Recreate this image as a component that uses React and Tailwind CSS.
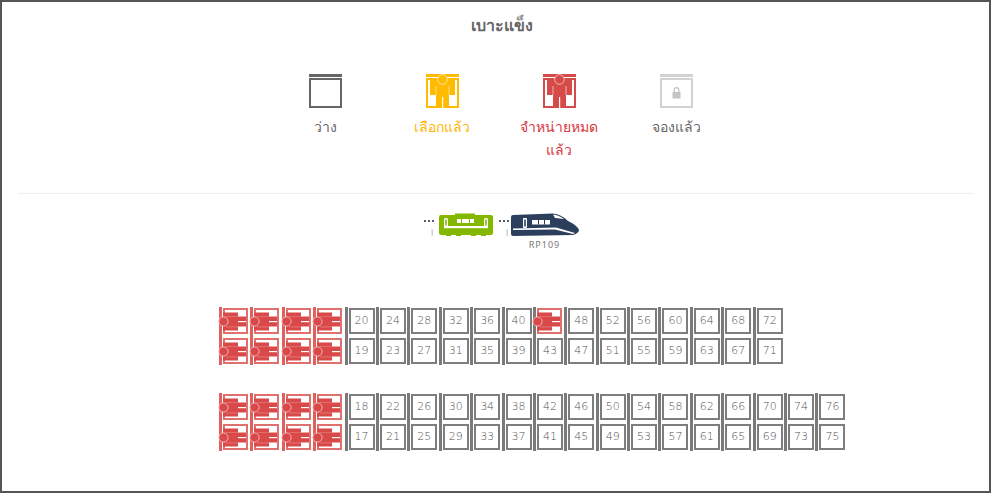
import React from 'react';

const thai = { fontFamily: '"Noto Sans", "Liberation Sans", "DejaVu Sans", sans-serif' };

const range = (from, to) => {
    const out = [];
    for (let n = from; n <= to; n += 4) out.push(n);
    return out;
};

const PersonIcon = ({ color }) => (
    <svg width="33" height="34" viewBox="0 0 33 34" className="block">
        <rect x="0" y="0" width="33" height="3" fill={color} />
        <rect x="1" y="5" width="31" height="28" fill="white" stroke={color} strokeWidth="2" />
        <rect x="4" y="5" width="6" height="16" fill={color} />
        <rect x="23" y="5" width="6" height="16" fill={color} />
        <rect x="4" y="5" width="25" height="7" fill={color} />
        <rect x="10" y="5" width="13" height="29" fill={color} />
        <rect x="9.6" y="12" width="0.8" height="9" fill="white" fillOpacity="0.7" />
        <rect x="22.6" y="12" width="0.8" height="9" fill="white" fillOpacity="0.7" />
        <rect x="16" y="23" width="1.2" height="11" fill="white" />
        <circle cx="16.5" cy="5.5" r="4.8" fill={color} stroke="#ffffff" strokeOpacity="0.6" strokeWidth="1" />
    </svg>
);

const EmptyIcon = () => (
    <svg width="33" height="34" viewBox="0 0 33 34" className="block">
        <rect x="0" y="0" width="33" height="3" fill="#666666" />
        <rect x="1" y="5" width="31" height="28" fill="white" stroke="#666666" strokeWidth="2" />
    </svg>
);

const LockIcon = () => (
    <svg width="33" height="34" viewBox="0 0 33 34" className="block">
        <rect x="0" y="0" width="33" height="3" fill="#d2d2d2" />
        <rect x="1" y="5" width="31" height="28" fill="white" stroke="#d2d2d2" strokeWidth="2" />
        <rect x="12.5" y="18" width="8" height="6.5" rx="0.5" fill="#c4c4c4" />
        <path d="M14.2 18 v-2 a2.3 2.3 0 0 1 4.6 0 v2" fill="none" stroke="#c4c4c4" strokeWidth="1.3" />
    </svg>
);

const SoldSeat = () => (
    <svg width="25" height="26" viewBox="0 0 25 26" className="block overflow-visible">
        <rect x="1" y="1" width="23" height="24" fill="white" stroke="#e0706d" strokeWidth="2" />
        <rect x="0" y="4.5" width="15" height="18" fill="#d9494a" />
        <rect x="3" y="8" width="12" height="0.8" fill="#f0a3a1" />
        <rect x="3" y="18.4" width="12" height="0.8" fill="#f0a3a1" />
        <rect x="2" y="8.5" width="21" height="10" fill="#d9494a" />
        <rect x="15" y="13" width="8" height="1.2" fill="white" />
        <circle cx="0.5" cy="13.5" r="4.6" fill="#d9494a" stroke="#f4b5b3" strokeWidth="1" />
    </svg>
);

const Seat = ({ value }) => {
    if (value === 0) return <SoldSeat />;
    return (
        <div
            className="w-[26px] h-[26px] border-2 border-[#7d7d7d] bg-white flex items-center justify-center text-[11px] text-[#505050]"
            style={{ fontFamily: '"DejaVu Sans", sans-serif', fontWeight: 300 }}
        >
            {value}
        </div>
    );
};

const SeatColumn = ({ top, bottom }) => {
    const sold = top === 0 && bottom === 0;
    return (
        <div className="flex w-[31.4px] shrink-0">
            <div className={`w-[3px] h-[58px] ${sold ? 'bg-[#e0605d]' : 'bg-[#7a7a7a]'}`} />
            <div className="ml-px mt-px flex flex-col gap-[4px]">
                <Seat value={top} />
                <Seat value={bottom} />
            </div>
        </div>
    );
};

const Coupler = () => (
    <svg width="12" height="24" viewBox="0 0 12 24" className="block">
        <rect x="0" y="7" width="2" height="2" fill="#555f70" />
        <rect x="4" y="7" width="2" height="2" fill="#555f70" />
        <rect x="8" y="7" width="2" height="2" fill="#555f70" />
        <rect x="7.5" y="16" width="1.4" height="7" fill="#cfcfcf" />
    </svg>
);

const GreenCar = () => (
    <svg width="54" height="24" viewBox="0 0 54 24" className="block">
        <path d="M2 2 H16 V0.5 H36 V2 H52 Q54 2 54 4 V20 Q54 22 52 22 H47 V23 H42 V22 H37 V23 H32 V22 H22 V23 H17 V22 H12 V23 H7 V22 H2 Q0 22 0 20 V4 Q0 2 2 2 Z" fill="#84b800" />
        <rect x="5" y="13" width="44" height="2.2" fill="white" />
        <rect x="5" y="5" width="4" height="9" rx="1.5" fill="white" />
        <rect x="6.2" y="6.5" width="1.6" height="6" fill="#84b800" />
        <rect x="45" y="5" width="4" height="9" rx="1.5" fill="white" />
        <rect x="46.2" y="6.5" width="1.6" height="6" fill="#84b800" />
        <rect x="18" y="6" width="17" height="4" fill="white" />
        <rect x="22" y="6" width="1" height="4" fill="#84b800" />
        <rect x="30" y="6" width="1" height="4" fill="#84b800" />
    </svg>
);

const Loco = () => (
    <svg width="68" height="24" viewBox="0 0 68 24" className="block">
        <path d="M0 4 Q0 2 2 2 L42 0.5 Q50 1 57 8 Q66 12 68 17 Q68 20 62 22 L2 23 Q0 23 0 21 Z" fill="#2b3f5c" />
        <rect x="12" y="5" width="4" height="10" rx="1" fill="white" />
        <rect x="13.2" y="6.5" width="1.6" height="7" fill="#2b3f5c" />
        <rect x="21" y="7" width="18" height="4.5" fill="white" />
        <rect x="27" y="7" width="1" height="4.5" fill="#2b3f5c" />
        <rect x="33" y="7" width="1" height="4.5" fill="#2b3f5c" />
        <path d="M2 15.5 L45 14.5 L64 20 L62 21 L44 16.5 L2 17 Z" fill="white" />
        <path d="M42 1.5 Q48 2 53 6 L44 5 Z" fill="white" />
    </svg>
);

const legend = [
    { icon: <EmptyIcon />, label: 'ว่าง', color: 'text-[#666666]' },
    { icon: <PersonIcon color="#ffbb00" />, label: 'เลือกแล้ว', color: 'text-[#ffb400]' },
    { icon: <PersonIcon color="#d64a47" />, label: 'จำหน่ายหมดแล้ว', color: 'text-[#d9363e]' },
    { icon: <LockIcon />, label: 'จองแล้ว', color: 'text-[#666666]' },
];

const upperTop = [0, 0, 0, 0, 20, 24, 28, 32, 36, 40, 0, ...range(48, 72)];
const upperBottom = [0, 0, 0, 0, ...range(19, 71)];
const lowerTop = [0, 0, 0, 0, ...range(18, 74), 76];
const lowerBottom = [0, 0, 0, 0, ...range(17, 73), 75];

const SeatBlock = ({ top, bottom }) => (
    <div className="flex">
        {top.map((value, i) => (
            <SeatColumn key={i} top={value} bottom={bottom[i]} />
        ))}
    </div>
);

export default function App() {
    return (
        <div className="w-[991px] h-[493px] border-2 border-[#555555] bg-white overflow-hidden" style={thai}>
            <div className="h-[72px] pt-[11px] pl-[12px] text-center text-[16px] leading-[24px] font-bold text-[#666666]">
                เบาะแข็ง
            </div>
            <div className="h-[119px] pl-[10px] flex justify-center">
                <div className="grid grid-cols-4 w-[468px] h-fit">
                    {legend.map((item) => (
                        <div key={item.label} className="flex flex-col items-center">
                            {item.icon}
                            <div className={`mt-[7px] w-[100px] text-center text-[14px] leading-[23px] ${item.color}`}>
                                {item.label}
                            </div>
                        </div>
                    ))}
                </div>
            </div>
            <div className="mx-4 border-t border-[#eeeeee]" />
            <div className="mt-[19px] pl-[11px] flex justify-center items-start">
                <Coupler />
                <div className="ml-[3px]"><GreenCar /></div>
                <div className="ml-[6px]"><Coupler /></div>
                <div className="flex flex-col items-center">
                    <Loco />
                    <div className="mt-[2px] text-[9px] leading-[12px] text-[#777777] tracking-[1px]">RP109</div>
                </div>
            </div>
            <div className="mt-[56px] pl-[217px] flex flex-col gap-[28px]">
                <SeatBlock top={upperTop} bottom={upperBottom} />
                <SeatBlock top={lowerTop} bottom={lowerBottom} />
            </div>
        </div>
    );
}
